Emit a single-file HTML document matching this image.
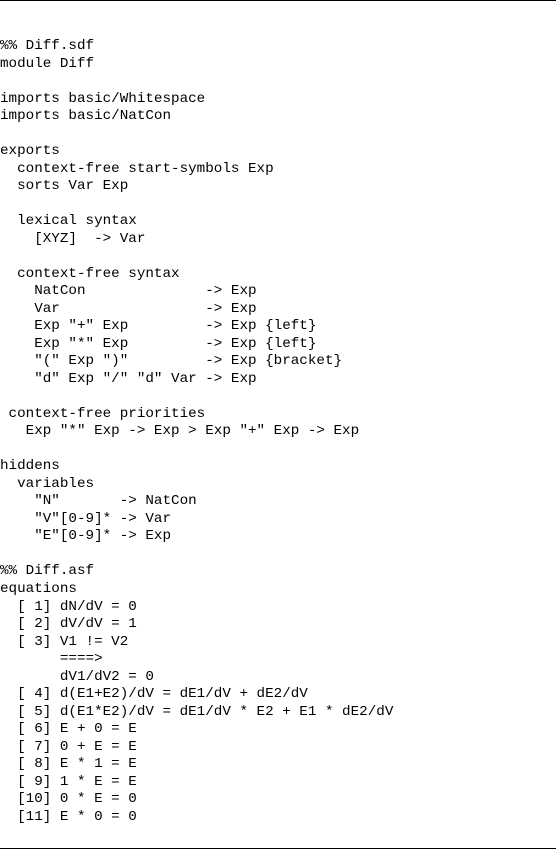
<!DOCTYPE html>
<html><head><meta charset="utf-8"><style>
html,body{margin:0;padding:0;background:#fff;}
body{width:556px;height:850px;position:relative;overflow:hidden;}
.t{position:absolute;left:0;right:0;top:0;height:1px;background:#000;}
.b{position:absolute;left:0;right:0;top:848px;height:1px;background:#000;}
pre{position:absolute;left:0;top:38px;margin:0;font-family:"Liberation Mono",monospace;font-size:14.25px;line-height:17.52px;color:#000;}
</style></head><body>
<div class="t"></div>
<pre>%% Diff.sdf
module Diff

imports basic/Whitespace
imports basic/NatCon

exports
  context-free start-symbols Exp
  sorts Var Exp

  lexical syntax
    [XYZ]  -&gt; Var

  context-free syntax
    NatCon              -&gt; Exp
    Var                 -&gt; Exp
    Exp "+" Exp         -&gt; Exp {left}
    Exp "*" Exp         -&gt; Exp {left}
    "(" Exp ")"         -&gt; Exp {bracket}
    "d" Exp "/" "d" Var -&gt; Exp

 context-free priorities
   Exp "*" Exp -&gt; Exp &gt; Exp "+" Exp -&gt; Exp

hiddens
  variables
    "N"       -&gt; NatCon
    "V"[0-9]* -&gt; Var
    "E"[0-9]* -&gt; Exp

%% Diff.asf
equations
  [ 1] dN/dV = 0
  [ 2] dV/dV = 1
  [ 3] V1 != V2
       ====&gt;
       dV1/dV2 = 0
  [ 4] d(E1+E2)/dV = dE1/dV + dE2/dV
  [ 5] d(E1*E2)/dV = dE1/dV * E2 + E1 * dE2/dV
  [ 6] E + 0 = E
  [ 7] 0 + E = E
  [ 8] E * 1 = E
  [ 9] 1 * E = E
  [10] 0 * E = 0
  [11] E * 0 = 0</pre>
<div class="b"></div>
</body></html>
